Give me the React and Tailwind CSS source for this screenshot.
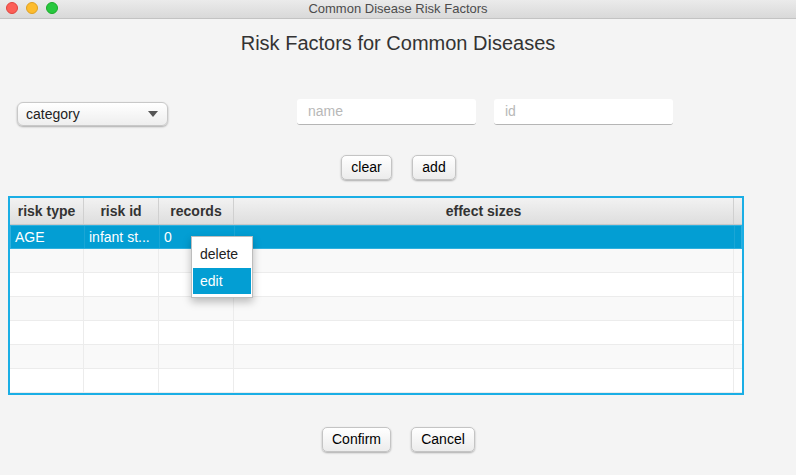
import React from 'react'

const cols = [
  { label: 'risk type', w: 'w-[74px]' },
  { label: 'risk id', w: 'w-[75px]' },
  { label: 'records', w: 'w-[75px]' },
  { label: 'effect sizes', w: 'w-[500px]' },
]

function MacButton({ children, className }) {
  return (
    <button
      className={
        'h-[25px] rounded-[5px] border border-[#c4c4c4] bg-gradient-to-b from-white to-[#ececec] text-[14px] text-black shadow-[0_1px_2px_rgba(0,0,0,0.3)] ' +
        className
      }
    >
      {children}
    </button>
  )
}

function Row({ idx, selected }) {
  const bg = selected ? 'bg-[#039ed3]' : idx % 2 === 1 ? 'bg-[#f9f9f9]' : 'bg-white'
  const cells = selected ? ['AGE', 'infant st...', '0', ''] : ['', '', '', '']
  return (
    <div className={'flex h-[24px] ' + bg + (selected ? ' border border-[#2fb0de]' : ' border-b border-[#ececec]')}>
      {cols.map((c, i) => (
        <div
          key={i}
          className={
            c.w +
            ' flex items-center px-[4px] text-[14px] border-r ' +
            (selected ? 'text-white border-[#1aa6d6]' : 'border-[#ececec]')
          }
        >
          {cells[i]}
        </div>
      ))}
      <div className="flex-1" />
    </div>
  )
}

export default function App() {
  return (
    <div
      className="relative w-[796px] h-[475px] bg-[#f4f4f4] overflow-hidden"
      style={{ fontFamily: '"Liberation Sans", Arial, sans-serif' }}
    >
      {/* title bar */}
      <div className="relative h-[19px] flex items-center justify-center bg-gradient-to-b from-[#ebebeb] to-[#d9d9d9] border-b border-[#c3c3c3]">
        <div className="absolute left-[6px] top-[2px] flex gap-[8px]">
          <span className="w-[12px] h-[12px] rounded-full bg-[#fc5f57] border border-[#e0443e]" />
          <span className="w-[12px] h-[12px] rounded-full bg-[#fdbc2e] border border-[#dea123]" />
          <span className="w-[12px] h-[12px] rounded-full bg-[#28c83f] border border-[#1aab29]" />
        </div>
        <span className="text-[13px] text-[#4c4c4c]">Common Disease Risk Factors</span>
      </div>

      {/* heading */}
      <div className="mt-[12px] text-center text-[20px] leading-[24px] text-[#333]">
        Risk Factors for Common Diseases
      </div>

      {/* inputs row */}
      <div className="mt-[44px] flex items-start pl-[17px]">
        <div className="mt-[3px] w-[151px] h-[24px] flex items-center justify-between pl-[8px] pr-[9px] rounded-[6px] border border-[#c8c8c8] bg-gradient-to-b from-white to-[#eeeeee] shadow-[0_1px_2px_rgba(0,0,0,0.3)]">
          <span className="text-[14px] text-[#222]">category</span>
          <svg width="10" height="6" viewBox="0 0 10 6">
            <path d="M0 0 L10 0 L5 6 Z" fill="#555" />
          </svg>
        </div>
        <div className="ml-[129px] w-[179px] h-[26px] bg-white rounded-[3px] border-b border-[#b5b5b5] flex items-center px-[11px] text-[14px] text-[#b8b8b8]">
          name
        </div>
        <div className="ml-[18px] w-[179px] h-[26px] bg-white rounded-[3px] border-b border-[#b5b5b5] flex items-center px-[11px] text-[14px] text-[#b8b8b8]">
          id
        </div>
      </div>

      {/* clear / add */}
      <div className="mt-[29px] flex pl-[341px] gap-[20px]">
        <MacButton className="w-[51px]">clear</MacButton>
        <MacButton className="w-[44px]">add</MacButton>
      </div>

      {/* table */}
      <div className="relative mt-[16px] ml-[8px] w-[736px] h-[199px] border-2 border-[#1aaee5] bg-white overflow-hidden">
        <div className="flex h-[27px] bg-gradient-to-b from-[#f2f2f2] to-[#dedede] border-b border-[#c8c8c8]">
          {cols.map((c, i) => (
            <div
              key={i}
              className={c.w + ' flex items-center justify-center border-r border-[#d0d0d0] text-[14px] font-bold text-[#333]'}
            >
              {c.label}
            </div>
          ))}
          <div className="flex-1" />
        </div>
        {[0, 1, 2, 3, 4, 5, 6, 7].map((i) => (
          <Row key={i} idx={i} selected={i === 0} />
        ))}
      </div>

      {/* context menu */}
      <div className="absolute left-[191px] top-[236px] w-[62px] pt-[4px] pb-[3px] px-[1px] bg-white border border-[#bdbdbd] shadow-[0_4px_8px_rgba(0,0,0,0.25)]">
        <div className="h-[27px] flex items-center pl-[7px] text-[14px] text-[#222]">delete</div>
        <div className="h-[26px] flex items-center pl-[7px] text-[14px] text-white bg-[#039ed3]">edit</div>
      </div>

      {/* confirm / cancel */}
      <div className="mt-[32px] flex pl-[322px] gap-[20px]">
        <MacButton className="w-[69px]">Confirm</MacButton>
        <MacButton className="w-[64px]">Cancel</MacButton>
      </div>
    </div>
  )
}
